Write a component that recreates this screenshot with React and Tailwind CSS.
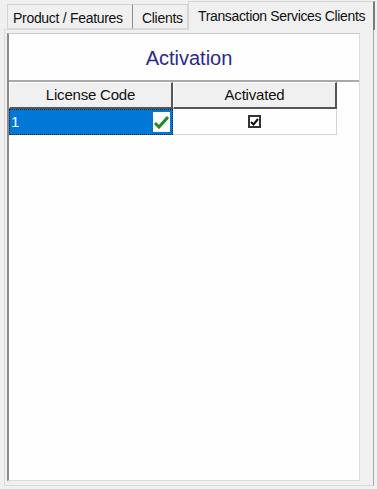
export default function App() {
  const font = { fontFamily: '"Liberation Sans", Arial, sans-serif' };
  return (
    <div className="w-[377px] h-[489px] bg-[#f0f0f0] overflow-hidden relative" style={font}>
      {/* Tab strip */}
      <div className="h-[29px] flex items-end pl-[7px] relative z-10">
        <div className="h-[25px] w-[126px] border-l border-t border-[#d4d4d4] border-r border-r-[#8c8c8c] border-b border-b-[#d9d9d9] bg-[#f0f0f0] flex items-start pt-[5px] pl-[5px] text-[14px] leading-[16px] tracking-[-0.3px] text-[#111]">
          Product / Features
        </div>
        <div className="h-[25px] w-[55px] border-t border-[#d4d4d4] border-r border-r-[#d4d4d4] border-b border-b-[#d9d9d9] bg-[#f0f0f0] flex items-start pt-[5px] pl-[9px] text-[14px] leading-[16px] tracking-[-0.3px] text-[#111]">
          Clients
        </div>
        <div className="h-[29px] w-[187px] border-l border-t border-[#d4d4d4] border-r-2 border-r-[#7a7a7a] bg-[#f0f0f0] flex items-start pt-[6px] pl-[9px] text-[14px] leading-[16px] tracking-[-0.35px] text-[#111] -mb-px">
          Transaction Services Clients
        </div>
      </div>
      {/* Tab page */}
      <div className="ml-[4px] w-[370px] h-[457px] border-l border-[#d9d9d9] border-r border-r-[#a8a8a8] border-t border-t-[#d9d9d9] border-b border-b-[#d9d9d9] pt-[3px] pl-[2px]">
        <div className="w-[353px] h-[448px] bg-[#fefefe] border-l-2 border-l-[#8a8a8a] border-t border-t-[#c8c8c8] border-r border-r-[#dcdcdc] border-b border-b-[#dcdcdc] flex flex-col">
          <div className="h-[46px] flex items-start justify-center pt-[12px] pl-[10px] text-[20px] leading-[24px] text-[#2a2a8c]">
            Activation
          </div>
          {/* Grid */}
          <div className="border-t-2 border-t-[#a9a9a9] flex flex-col">
            <div className="flex h-[27px]">
              <div className="w-[164px] h-[27px] bg-[#f0f0f0] border-l border-t border-[#ffffff] border-r-2 border-r-[#555] border-b-2 border-b-[#555] flex items-center justify-center text-[15px] text-[#111] tracking-[-0.2px]">
                License Code
              </div>
              <div className="w-[164px] h-[27px] bg-[#f0f0f0] border-l border-t border-[#ffffff] border-r-2 border-r-[#555] border-b-2 border-b-[#555] flex items-center justify-center text-[15px] text-[#111] tracking-[-0.2px]">
                Activated
              </div>
            </div>
            <div className="flex h-[26px]">
              <div className="w-[164px] h-[26px] bg-[#0078d7] border border-dotted border-[#222] flex items-center justify-between pl-[1px] pr-[2px]">
                <span className="text-[15px] text-white">1</span>
                <span className="w-[17px] h-[20px] bg-white flex items-center justify-center">
                  <svg width="15" height="13" viewBox="0 0 15 13">
                    <path d="M1 7 L5 11 L14 1" fill="none" stroke="#1f8a1f" strokeWidth="3" />
                  </svg>
                </span>
              </div>
              <div className="w-[164px] h-[26px] border-r border-b border-[#d4d4d4] flex items-center justify-center">
                <span className="w-[13px] h-[13px] border-2 border-[#333] bg-white flex items-center justify-center">
                  <svg width="9" height="8" viewBox="0 0 9 8">
                    <path d="M1 4 L3.5 6.5 L8 1" fill="none" stroke="#111" strokeWidth="2" />
                  </svg>
                </span>
              </div>
              <div className="flex-1 border-b border-transparent"></div>
            </div>
          </div>
        </div>
      </div>
    </div>
  );
}
